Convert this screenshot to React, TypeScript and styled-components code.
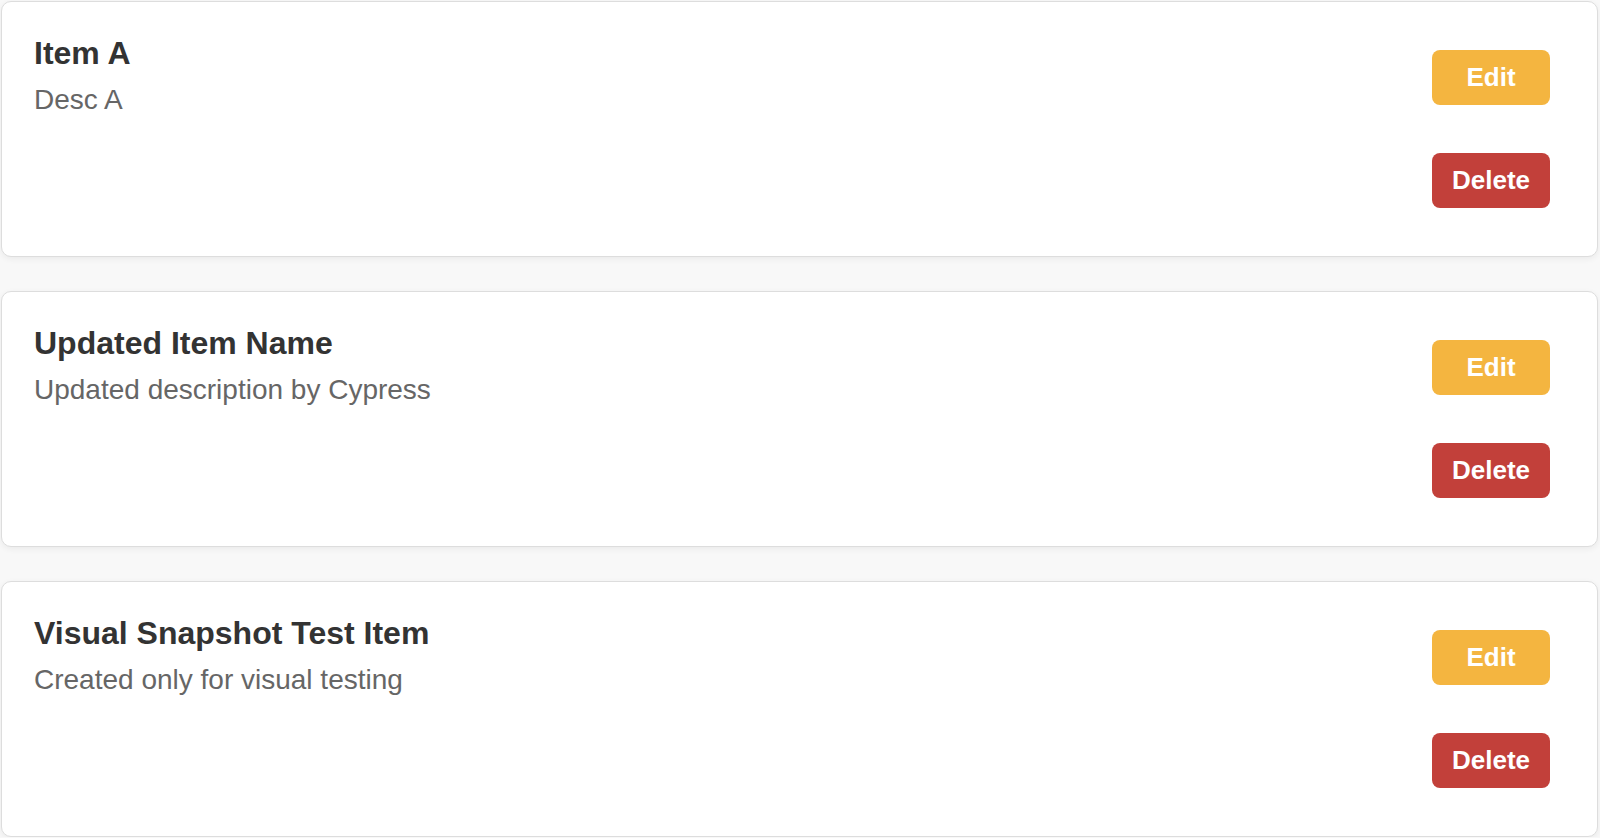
import React from 'react';
import styled, { createGlobalStyle } from 'styled-components';

type Item = { id: number; name: string; description: string };

const ITEMS: Item[] = [
  { id: 1, name: 'Item A', description: 'Desc A' },
  { id: 2, name: 'Updated Item Name', description: 'Updated description by Cypress' },
  { id: 3, name: 'Visual Snapshot Test Item', description: 'Created only for visual testing' },
];

const GlobalStyle = createGlobalStyle`
  html, body {
    margin: 0;
    padding: 0;
    background: #f8f8f8;
    font-family: 'Liberation Sans', Arial, Helvetica, sans-serif;
  }
`;

export default function App() {
  return (
    <>
      <GlobalStyle />
      <ItemList>
        {ITEMS.map((item) => (
          <ItemCard key={item.id}>
            <ItemInfo>
              <ItemName>{item.name}</ItemName>
              <ItemDescription>{item.description}</ItemDescription>
            </ItemInfo>
            <Actions>
              <ActionButton $variant="edit">Edit</ActionButton>
              <ActionButton $variant="delete">Delete</ActionButton>
            </Actions>
          </ItemCard>
        ))}
      </ItemList>
    </>
  );
}

const ItemList = styled.ul`
  list-style: none;
  margin: 0;
  padding: 1px 2px 0 1px;
  display: flex;
  flex-direction: column;
  gap: 34px;
`;

const ItemCard = styled.li`
  display: flex;
  justify-content: space-between;
  align-items: flex-start;
  padding: 32px;
  background: #ffffff;
  border: 1px solid #dddddd;
  border-radius: 10px;
  box-shadow: 0 2px 6px rgba(0, 0, 0, 0.06);
`;

const ItemInfo = styled.div`
  display: flex;
  flex-direction: column;
`;

const ItemName = styled.h3`
  margin: 1px 0 12px;
  font-size: 32px;
  font-weight: 700;
  color: #333333;
`;

const ItemDescription = styled.p`
  margin: 0;
  font-size: 28px;
  color: #666666;
`;

const Actions = styled.div`
  display: flex;
  flex-direction: column;
  gap: 48px;
  margin: 16px 15px 16px 16px;
`;

const ActionButton = styled.button<{ $variant: 'edit' | 'delete' }>`
  width: 118px;
  height: 55px;
  padding: 0 20px;
  border: none;
  border-radius: 8px;
  font-family: 'Liberation Sans', Arial, sans-serif;
  font-size: 26px;
  font-weight: 700;
  color: #ffffff;
  cursor: pointer;
  background: ${({ $variant }) => ($variant === 'edit' ? '#f4b540' : '#c2403a')};
`;
